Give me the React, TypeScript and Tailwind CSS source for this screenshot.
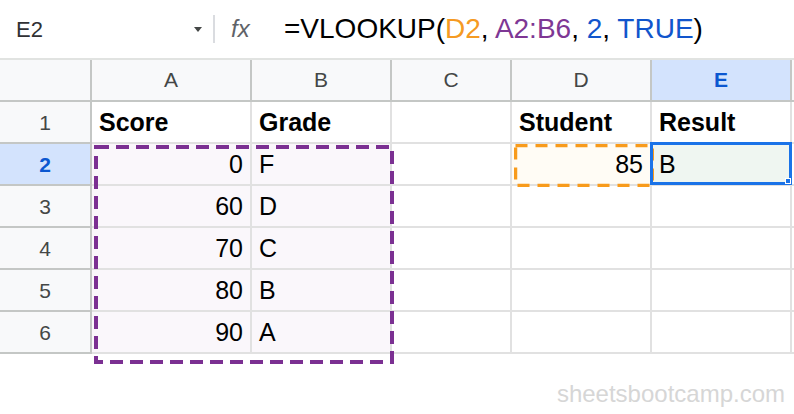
import React from 'react';

const cols = ['A', 'B', 'C', 'D', 'E'];

type Cell = { v: string; right?: boolean; bold?: boolean; bg?: string };

const rows: Cell[][] = [
  [{ v: 'Score', bold: true }, { v: 'Grade', bold: true }, { v: '' }, { v: 'Student', bold: true }, { v: 'Result', bold: true }],
  [{ v: '0', right: true, bg: 'bg-[#faf7fb]' }, { v: 'F', bg: 'bg-[#faf7fb]' }, { v: '' }, { v: '85', right: true, bg: 'bg-[#fffcf5]' }, { v: 'B', bg: 'bg-[#eff6f1]' }],
  [{ v: '60', right: true, bg: 'bg-[#faf7fb]' }, { v: 'D', bg: 'bg-[#faf7fb]' }, { v: '' }, { v: '' }, { v: '' }],
  [{ v: '70', right: true, bg: 'bg-[#faf7fb]' }, { v: 'C', bg: 'bg-[#faf7fb]' }, { v: '' }, { v: '' }, { v: '' }],
  [{ v: '80', right: true, bg: 'bg-[#faf7fb]' }, { v: 'B', bg: 'bg-[#faf7fb]' }, { v: '' }, { v: '' }, { v: '' }],
  [{ v: '90', right: true, bg: 'bg-[#faf7fb]' }, { v: 'A', bg: 'bg-[#faf7fb]' }, { v: '' }, { v: '' }, { v: '' }],
];

const font = { fontFamily: '"Liberation Sans", Arial, sans-serif' };

function FormulaBar() {
  return (
    <div className="flex h-[60px] items-center border-b-2 border-[#e1e3e1] bg-white">
      <div className="w-[194px] pl-[16px] text-[22px] text-[#303134]">E2</div>
      <div className="h-0 w-0 border-x-[4px] border-t-[5px] border-x-transparent border-t-[#444746]" />
      <div className="ml-[11px] h-[28px] w-[2px] bg-[#dadce0]" />
      <div className="ml-[16px] w-[53px] text-[24px] italic text-[#5f6368]">fx</div>
      <div className="text-[28px] text-black">
        =VLOOKUP(<span className="text-[#f59a23]">D2</span>, <span className="text-[#7e3794]">A2:B6</span>,{' '}
        <span className="text-[#1155cc]">2</span>, <span className="text-[#1155cc]">TRUE</span>)
      </div>
    </div>
  );
}

function Grid() {
  return (
    <div className="relative">
      <div className="grid grid-cols-[92px_160px_140px_120px_140px_140px_1fr]">
        {/* column headers */}
        <div className="h-[42px] border-r-2 border-b-2 border-[#c4c7c5] bg-[#f8f9fa]" />
        {cols.map((c) => (
          <div
            key={c}
            className={
              c === 'E'
                ? 'flex h-[42px] items-center justify-center border-r-2 border-b-2 border-[#c4c7c5] bg-[#d3e3fd] text-[21px] font-bold text-[#0b57d0]'
                : 'flex h-[42px] items-center justify-center border-r-2 border-b-2 border-[#c4c7c5] bg-[#f8f9fa] text-[21px] text-[#444746]'
            }
          >
            {c}
          </div>
        ))}
        <div className="h-[42px] border-b-2 border-[#c4c7c5] bg-[#f8f9fa]" />

        {rows.map((r, i) => (
          <React.Fragment key={i}>
            <div
              className={
                i === 1
                  ? 'flex h-[42px] items-center justify-center border-r-2 border-b-2 border-[#c4c7c5] bg-[#d3e3fd] pt-[1px] text-[21px] font-bold text-[#0b57d0]'
                  : 'flex h-[42px] items-center justify-center border-r-2 border-b-2 border-[#c4c7c5] bg-[#f8f9fa] pt-[1px] text-[21px] text-[#444746]'
              }
            >
              {i + 1}
            </div>
            {r.map((cell, j) => (
              <div
                key={j}
                className={`flex h-[42px] items-center border-r-2 border-b-2 border-[#e1e1e1] px-[7px] pt-[2px] text-[25px] text-black ${
                  cell.right ? 'justify-end' : 'justify-start'
                } ${cell.bold ? 'font-bold' : ''} ${cell.bg ?? 'bg-white'}`}
              >
                {cell.v}
              </div>
            ))}
            <div className="h-[42px] border-b-2 border-[#e1e1e1]" />
          </React.Fragment>
        ))}
      </div>

      {/* copy range marquee A2:B6 */}
      <svg className="pointer-events-none absolute left-[94px] top-[85px]" width="300" height="219">
        <rect x="2" y="2" width="296" height="215" fill="none" stroke="#7b3092" strokeWidth="4" strokeDasharray="13 7" />
      </svg>

      {/* reference D2 */}
      <svg className="pointer-events-none absolute left-[514px] top-[84px]" width="140" height="43">
        <rect x="1.5" y="1.5" width="137" height="40" fill="none" stroke="#f89b1c" strokeWidth="3.5" strokeDasharray="12 8" />
      </svg>

      {/* active cell E2 */}
      <div className="pointer-events-none absolute left-[650px] top-[82px] h-[43px] w-[142px] border-[3px] border-[#1a73e8]">
        <div className="absolute -bottom-[2px] -right-[2px] h-[6px] w-[6px] border border-white bg-[#1a73e8]" />
      </div>
    </div>
  );
}

export default function App() {
  return (
    <div className="h-[414px] w-[794px] overflow-hidden bg-white" style={font}>
      <FormulaBar />
      <Grid />
      <div className="flex justify-end pr-[9px] pt-[22px] text-[24px] text-[#d6d6d6]">sheetsbootcamp.com</div>
    </div>
  );
}
